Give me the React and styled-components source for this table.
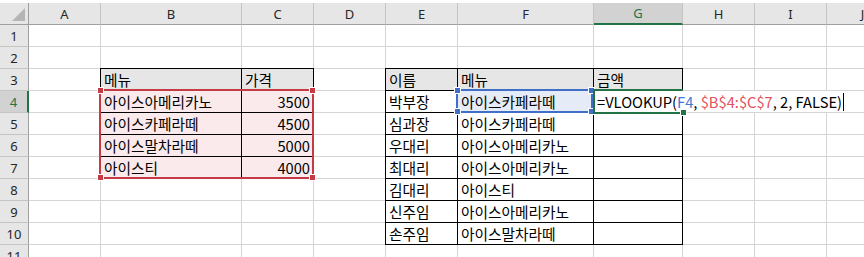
import React from 'react';
import styled, { createGlobalStyle, css } from 'styled-components';

const GREEN = '#217346';
const RED = '#c43b44';
const BLUE = '#3f6fc6';

const GlobalStyle = createGlobalStyle`
    html, body {
        margin: 0;
        background: #fff;
        overflow: hidden;
    }
`

const COLS = [
    { key: '', w: 29 },
    { key: 'A', w: 72 },
    { key: 'B', w: 141 },
    { key: 'C', w: 72 },
    { key: 'D', w: 72 },
    { key: 'E', w: 72 },
    { key: 'F', w: 136 },
    { key: 'G', w: 89 },
    { key: 'H', w: 72 },
    { key: 'I', w: 72 },
    { key: 'J', w: 72 },
]
const ROWS = 11;

const VALUES = {
    B3: '메뉴', C3: '가격', E3: '이름', F3: '메뉴', G3: '금액',
    B4: '아이스아메리카노', C4: 3500,
    B5: '아이스카페라떼', C5: 4500,
    B6: '아이스말차라떼', C6: 5000,
    B7: '아이스티', C7: 4000,
    E4: '박부장', F4: '아이스카페라떼',
    E5: '심과장', F5: '아이스카페라떼',
    E6: '우대리', F6: '아이스아메리카노',
    E7: '최대리', F7: '아이스아메리카노',
    E8: '김대리', F8: '아이스티',
    E9: '신주임', F9: '아이스아메리카노',
    E10: '손주임', F10: '아이스말차라떼',
}

// table blocks: first/last column index, first/last row
const TABLES = [
    { c0: 2, c1: 3, r0: 3, r1: 7 },
    { c0: 5, c1: 7, r0: 3, r1: 10 },
]

const ACTIVE = { col: 7, row: 4 };

const Sheet = styled.div`
    margin-top: 3px;
    display: grid;
    grid-template-columns: ${props => props.$cols};
    grid-auto-rows: 22px;
    font-family: "Noto Sans CJK KR", "Noto Sans", sans-serif;
    font-size: 14.7px;
    color: #000;
`

const place = css`
    grid-column: ${props => props.$c + 1};
    grid-row: ${props => props.$r + 1};
`

const ColHead = styled.div`
    ${place}
    box-sizing: border-box;
    background: #e6e6e6;
    border-right: 1px solid #c4c4c4;
    border-bottom: 1px solid #9f9f9f;
    display: flex;
    align-items: center;
    justify-content: center;
    font-family: "Noto Sans", sans-serif;
    font-size: 13px;
    color: #262626;
    ${props => props.$active && css`
        background: #d2d2d2;
        color: ${GREEN};
        border-bottom: 2px solid ${GREEN};
    `}
`

const Corner = styled(ColHead)`
    border-right: 1px solid #9f9f9f;
    justify-content: flex-end;
    align-items: flex-end;
    padding: 0 3px 3px 0;
`

const RowHead = styled.div`
    ${place}
    box-sizing: border-box;
    background: #e6e6e6;
    border-right: 1px solid #9f9f9f;
    border-bottom: 1px solid #c4c4c4;
    display: flex;
    align-items: center;
    justify-content: center;
    font-family: "Noto Sans", sans-serif;
    font-size: 13px;
    color: #262626;
    ${props => props.$active && css`
        background: #d2d2d2;
        color: ${GREEN};
        border-right: 2px solid ${GREEN};
    `}
`

const Cell = styled.div`
    ${place}
    box-sizing: border-box;
    border-right: 1px solid #d4d4d4;
    border-bottom: 1px solid #d4d4d4;
    padding: 0 3px;
    display: flex;
    align-items: center;
    justify-content: ${props => props.$right ? 'flex-end' : 'flex-start'};
    white-space: nowrap;
    overflow: hidden;
    background: ${props => props.$bg || 'transparent'};
    ${props => props.$table && css`
        border-right-color: #000;
        border-bottom-color: #000;
    `}
    ${props => props.$edges && css`
        box-shadow: ${props.$edges};
    `}
`

const Frame = styled.div`
    position: relative;
    z-index: 2;
    pointer-events: none;
    grid-column: ${props => props.$col};
    grid-row: ${props => props.$row};
    margin: ${props => props.$margin};
    border: 2px solid ${props => props.$color};
    ${props => props.$open && css`
        z-index: 4;
        border-right: none;
    `}
`

const Handle = styled.span`
    position: absolute;
    width: 5px;
    height: 5px;
    background: ${props => props.$color};
    border: 1px solid #fff;
    ${props => props.$top ? 'top: -4px;' : 'bottom: -4px;'}
    ${props => props.$left ? 'left: -4px;' : 'right: -4px;'}
`

const Editor = styled.div`
    position: relative;
    z-index: 3;
    grid-column: 8 / -1;
    grid-row: 5 / 6;
    margin: 0 0 1px 1px;
    background: #fff;
    padding-left: 2px;
    display: flex;
    align-items: center;
    white-space: nowrap;
`

const Ref = styled.span`
    color: ${props => props.$color};
`

const Caret = styled.span`
    display: inline-block;
    width: 1px;
    height: 18px;
    margin-left: 1px;
    background: #000;
`

function cellInfo(c, r) {
    const t = TABLES.find(t => c >= t.c0 && c <= t.c1 && r >= t.r0 && r <= t.r1);
    if (!t) return { table: false };
    const shadows = [];
    if (c === t.c0) shadows.push('-1px 0 0 #000');
    if (r === t.r0) shadows.push('0 -1px 0 #000');
    if (c === t.c0 && r === t.r0) shadows.push('-1px -1px 0 #000');
    let bg;
    if (r === t.r0) bg = '#e7e6e6';
    else if (t.c0 === 2) bg = '#fbeaeb';
    else if (c === 6 && r === 4) bg = '#e6ecf7';
    return { table: true, edges: shadows.join(', '), bg };
}

function Corners({ color, fillOnly }) {
    if (fillOnly) return <Handle $color={color} />;
    return (
        <>
            <Handle $color={color} $top $left />
            <Handle $color={color} $top />
            <Handle $color={color} $left />
            <Handle $color={color} />
        </>
    )
}

export default function App() {
    const cols = COLS.map(c => `${c.w}px`).join(' ');
    const rows = [];

    // header row
    rows.push(
        <Corner key="corner" $c={0} $r={0}>
            <svg width="13" height="13" viewBox="0 0 13 13">
                <polygon points="13,0 13,13 0,13" fill="#b5b5b5" />
            </svg>
        </Corner>
    );
    COLS.slice(1).forEach((c, i) => {
        rows.push(
            <ColHead key={c.key} $c={i + 1} $r={0} $active={i + 1 === ACTIVE.col}>{c.key}</ColHead>
        );
    });

    for (let r = 1; r <= ROWS; r++) {
        rows.push(<RowHead key={`r${r}`} $c={0} $r={r} $active={r === ACTIVE.row}>{r}</RowHead>);
        COLS.slice(1).forEach((c, i) => {
            const ci = i + 1;
            const id = `${c.key}${r}`;
            const v = VALUES[id];
            const info = cellInfo(ci, r);
            rows.push(
                <Cell key={id} $c={ci} $r={r} $table={info.table} $edges={info.edges} $bg={info.bg}
                    $right={typeof v === 'number'}>
                    {v}
                </Cell>
            );
        });
    }

    return (
        <>
            <GlobalStyle />
            <Sheet $cols={cols}>
                {rows}
                <Frame $col="3 / 5" $row="5 / 9" $margin="-2px 0 0 -2px" $color={RED}>
                    <Corners color={RED} />
                </Frame>
                <Frame $col="7 / 8" $row="5 / 6" $margin="-2px 1px 0 -2px" $color={BLUE}>
                    <Corners color={BLUE} />
                </Frame>
                <Editor>
                    <span>
                        =VLOOKUP(<Ref $color="#3f7bd6">F4</Ref>, <Ref $color="#e2505e">$B$4:$C$7</Ref>, 2, FALSE)
                    </span>
                    <Caret />
                </Editor>
                <Frame $col="8 / 9" $row="5 / 6" $margin="-2px 0 -1px -1px" $color={GREEN} $open>
                    <Corners color={GREEN} fillOnly />
                </Frame>
            </Sheet>
        </>
    )
}
